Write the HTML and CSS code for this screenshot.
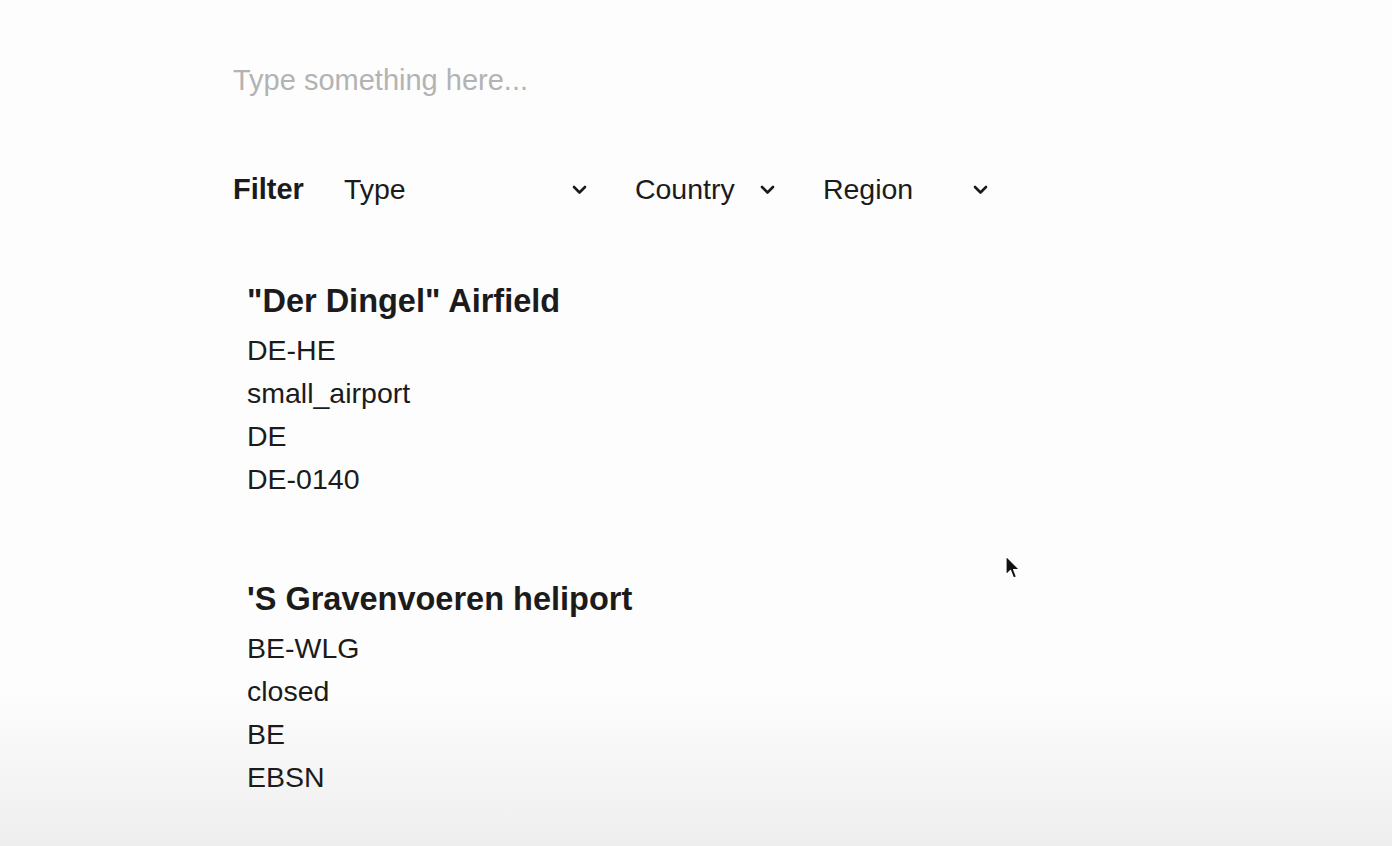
FILE: index.html
```html
<!DOCTYPE html>
<html lang="en">
<head>
<meta charset="utf-8">
<title>Airports</title>
<link rel="stylesheet" href="styles.css">
</head>
<body>
<main class="page">
  <input class="search" type="text" placeholder="Type something here...">
  <div class="filters">
    <span class="filter-label">Filter</span>
    <div class="select select-type"><span>Type</span><svg class="chev" width="15" height="10" viewBox="0 0 15 10"><polyline points="2,2 7.5,7.5 13,2" fill="none" stroke="#1a1a1a" stroke-width="2.6" stroke-linecap="round" stroke-linejoin="round"/></svg></div>
    <div class="select select-country"><span>Country</span><svg class="chev" width="15" height="10" viewBox="0 0 15 10"><polyline points="2,2 7.5,7.5 13,2" fill="none" stroke="#1a1a1a" stroke-width="2.6" stroke-linecap="round" stroke-linejoin="round"/></svg></div>
    <div class="select select-region"><span>Region</span><svg class="chev" width="15" height="10" viewBox="0 0 15 10"><polyline points="2,2 7.5,7.5 13,2" fill="none" stroke="#1a1a1a" stroke-width="2.6" stroke-linecap="round" stroke-linejoin="round"/></svg></div>
  </div>
  <section class="results">
    <article class="card">
      <h3 class="card-title">"Der Dingel" Airfield</h3>
      <div class="line">DE-HE</div>
      <div class="line">small_airport</div>
      <div class="line">DE</div>
      <div class="line">DE-0140</div>
    </article>
    <article class="card">
      <h3 class="card-title">'S Gravenvoeren heliport</h3>
      <div class="line">BE-WLG</div>
      <div class="line">closed</div>
      <div class="line">BE</div>
      <div class="line">EBSN</div>
    </article>
  </section>
</main>
<svg class="cursor" width="18" height="26" viewBox="0 0 18 26"><path d="M1 1 L1 20 L5.5 15.5 L8.5 23 L11.5 21.8 L8.6 14.6 L14.5 14.6 Z" fill="#111" stroke="#fff" stroke-width="1.2" stroke-linejoin="round"/></svg>
</body>
</html>
```

FILE: styles.css
```css
html, body {
  margin: 0;
  padding: 0;
}
body {
  min-height: 846px;
  background: linear-gradient(to bottom, #fdfdfd 0, #fdfdfd 690px, #eeeeee 846px);
  font-family: "Liberation Sans", Arial, Helvetica, sans-serif;
  color: #1b1b1b;
  font-size: 28.5px;
  overflow: hidden;
}
.page {
  padding: 52px 0 0 233px;
  display: flex;
  flex-direction: column;
}
.search {
  width: 520px;
  height: 56px;
  border: none;
  outline: none;
  background: transparent;
  padding: 0;
  font-family: inherit;
  font-size: 29px;
  color: #1b1b1b;
}
.search::placeholder {
  color: #b3b3b3;
}
.filters {
  margin-top: 59px;
  height: 44px;
  display: flex;
  align-items: center;
  gap: 32px;
}
.filter-label {
  font-weight: bold;
  font-size: 29px;
}
.select {
  display: flex;
  align-items: center;
  justify-content: space-between;
  padding: 0 8px;
  box-sizing: border-box;
  height: 44px;
  font-size: 28.5px;
}
.select-type { width: 259px; }
.select-country { width: 156px; }
.select-region { width: 181px; }
.chev {
  display: block;
  margin-top: 2px;
}
.results {
  margin-top: 69px;
  display: flex;
  flex-direction: column;
  gap: 77px;
}
.card {
  padding-left: 14px;
}
.card-title {
  margin: 0 0 6px 0;
  font-size: 32.5px;
  line-height: 43px;
  font-weight: bold;
}
.line {
  line-height: 43px;
  font-size: 28.5px;
}
.cursor {
  position: absolute;
  left: 1005px;
  top: 555px;
}
```
